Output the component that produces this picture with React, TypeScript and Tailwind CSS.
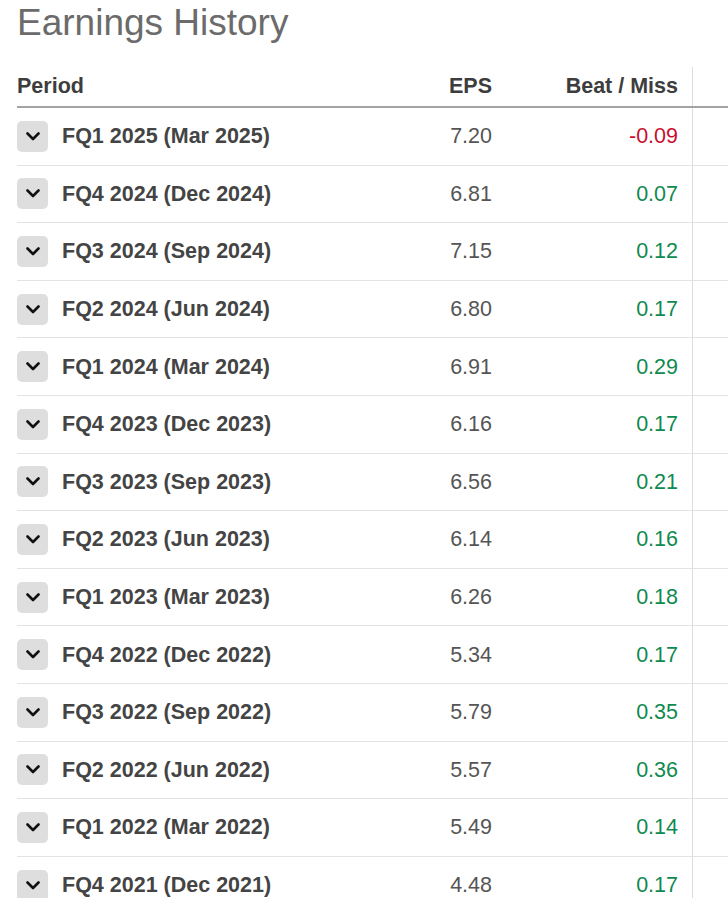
import React from "react";

type Row = { period: string; eps: string; diff: string };

const rows: Row[] = [
  { period: "FQ1 2025 (Mar 2025)", eps: "7.20", diff: "-0.09" },
  { period: "FQ4 2024 (Dec 2024)", eps: "6.81", diff: "0.07" },
  { period: "FQ3 2024 (Sep 2024)", eps: "7.15", diff: "0.12" },
  { period: "FQ2 2024 (Jun 2024)", eps: "6.80", diff: "0.17" },
  { period: "FQ1 2024 (Mar 2024)", eps: "6.91", diff: "0.29" },
  { period: "FQ4 2023 (Dec 2023)", eps: "6.16", diff: "0.17" },
  { period: "FQ3 2023 (Sep 2023)", eps: "6.56", diff: "0.21" },
  { period: "FQ2 2023 (Jun 2023)", eps: "6.14", diff: "0.16" },
  { period: "FQ1 2023 (Mar 2023)", eps: "6.26", diff: "0.18" },
  { period: "FQ4 2022 (Dec 2022)", eps: "5.34", diff: "0.17" },
  { period: "FQ3 2022 (Sep 2022)", eps: "5.79", diff: "0.35" },
  { period: "FQ2 2022 (Jun 2022)", eps: "5.57", diff: "0.36" },
  { period: "FQ1 2022 (Mar 2022)", eps: "5.49", diff: "0.14" },
  { period: "FQ4 2021 (Dec 2021)", eps: "4.48", diff: "0.17" },
];

function Chevron() {
  return (
    <div className="flex h-[31px] w-[31px] shrink-0 items-center justify-center rounded-[5px] bg-[#dedede]">
      <svg width="14" height="9" viewBox="0 0 14 9" fill="none">
        <path d="M1.5 1.5 L7 7 L12.5 1.5" stroke="#111" strokeWidth="2.6" strokeLinecap="round" strokeLinejoin="round" />
      </svg>
    </div>
  );
}

export default function App() {
  return (
    <div className="h-[898px] w-[728px] overflow-hidden bg-white font-['Liberation_Sans',Arial,sans-serif]">
      <h1 className="pl-[17px] pt-[2px] text-[37px] leading-[42px] text-[#6b6b6b]">Earnings History</h1>
      <div className="mt-[23px] pl-[17px]">
        <div className="grid h-[41px] grid-cols-[383px_106px_186px_1fr] border-b-2 border-[#a3a3a3] text-[21.5px] font-bold text-[#3d3d3d]">
          <div className="flex items-center">Period</div>
          <div className="flex items-center justify-end pr-[14px]">EPS</div>
          <div className="flex items-center justify-end pr-[14px]">Beat / Miss</div>
          <div className="border-l border-[#dcdcdc]" />
        </div>
        {rows.map((r) => (
          <div
            key={r.period}
            className="grid h-[57.6px] grid-cols-[383px_106px_186px_1fr] border-b border-[#e3e3e3] text-[21.5px]"
          >
            <div className="flex items-center gap-[14px]">
              <Chevron />
              <span className="font-bold text-[#444]">{r.period}</span>
            </div>
            <div className="flex items-center justify-end pr-[14px] text-[#555]">{r.eps}</div>
            <div
              className={
                r.diff.startsWith("-")
                  ? "flex items-center justify-end pr-[14px] text-[#c8102e]"
                  : "flex items-center justify-end pr-[14px] text-[#0f8a4f]"
              }
            >
              {r.diff}
            </div>
            <div className="border-l border-[#dcdcdc]" />
          </div>
        ))}
      </div>
    </div>
  );
}
